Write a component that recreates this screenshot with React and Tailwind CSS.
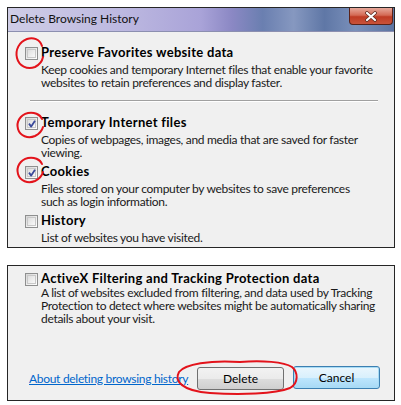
import React from "react";

function Box({ checked, className = "" }) {
  return (
    <div className={"relative w-[13px] h-[13px] shrink-0 border border-[#8e8f8f] bg-[linear-gradient(135deg,#d6d6d6_0%,#f4f4f4_70%,#ffffff_100%)] " + className}>
      <div className="absolute inset-[1px] border border-[#c8c8c8]" />
      {checked && (
        <svg className="absolute left-[1px] top-[1px]" width="10" height="10" viewBox="0 0 10 10">
          <path d="M2 4.6 L4.2 7.6 L8 1.8" fill="none" stroke="#3a4a9a" strokeWidth="1.8" strokeLinejoin="round" />
        </svg>
      )}
    </div>
  );
}

function Row({ checked, title, lines, className = "", gap = "mt-[3px]" }) {
  return (
    <div className={"flex " + className}>
      <Box checked={checked} className="mt-[3px]" />
      <div className="ml-[3px] whitespace-nowrap">
        <div className="font-bold text-[13px] tracking-[0.3px] leading-[16px] text-black">{title}</div>
        <div className={gap + " text-[12px] tracking-[-0.3px] leading-[13px] text-[#1a1a1a]"}>
          {lines.map((l, i) => (
            <div key={i}>{l}</div>
          ))}
        </div>
      </div>
    </div>
  );
}

export default function App() {
  return (
    <div
      className="relative w-[401px] h-[405px] bg-white overflow-hidden"
      style={{ fontFamily: 'Lato, "Noto Sans", sans-serif' }}
    >
      <div className="ml-[7px] mt-[7px] w-[388px] h-[241px] border border-[#262626] bg-[#f0f0f0] flex flex-col">
        <div className="h-[24px] shrink-0 flex items-start justify-between border-b border-[#8c8fb0] bg-[linear-gradient(90deg,#cfcde6_0%,#bcb8e0_30%,#a9a3d8_50%,#8b88c4_58%,#6a7fb0_66%,#8698c0_74%,#5f77a6_82%,#7a90ba_90%,#5c74a2_100%)]">
          <div className="pl-[2px] pt-[3px] text-[12px] leading-[16px] text-[#111] whitespace-nowrap">Delete Browsing History</div>
          <div className="mr-[1px] w-[44px] h-[17px] rounded-b-[4px] border border-t-0 border-[#5a2218] bg-[linear-gradient(180deg,#e7a99b_0%,#d46a55_45%,#bf3b24_55%,#c9533a_100%)] flex items-center justify-center">
            <svg width="14" height="11" viewBox="0 0 14 11">
              <path d="M3 2 L11 9 M11 2 L3 9" stroke="#5a2a20" strokeWidth="3.6" strokeLinecap="round" />
              <path d="M3 2 L11 9 M11 2 L3 9" stroke="#ffffff" strokeWidth="2.2" strokeLinecap="round" />
            </svg>
          </div>
        </div>
        <div className="pl-[17px] pt-[12px]">
          <Row
            title="Preserve Favorites website data"
            lines={[
              "Keep cookies and temporary Internet files that enable your favorite",
              "websites to retain preferences and display faster.",
            ]}
          />
          <div className="ml-[5px] w-[348px] mt-[11px] mb-[12px] h-[2px] border-t border-[#a0a0a0] border-b border-b-white" />
          <Row
            checked
            title="Temporary Internet files"
            lines={[
              "Copies of webpages, images, and media that are saved for faster",
              "viewing.",
            ]}
          />
          <Row
            checked
            className="mt-[4px]"
            title="Cookies"
            lines={[
              "Files stored on your computer by websites to save preferences",
              "such as login information.",
            ]}
          />
          <Row
            className="mt-[4px]"
            title="History"
            lines={["List of websites you have visited."]}
          />
        </div>
      </div>

      <div className="ml-[7px] mt-[17px] w-[388px] h-[136px] border border-[#262626] bg-[#f0f0f0] flex flex-col">
        <div className="pl-[17px] pt-[4px]">
          <Row
            gap="mt-0"
            title="ActiveX Filtering and Tracking Protection data"
            lines={[
              "A list of websites excluded from filtering, and data used by Tracking",
              "Protection to detect where websites might be automatically sharing",
              "details about your visit.",
            ]}
          />
        </div>
        <div className="mt-[42px] flex items-center pl-[21px] pr-[14px]">
          <span className="text-[12px] tracking-[-0.3px] leading-[14px] text-[#0066cc] underline whitespace-nowrap">About deleting browsing history</span>
          <div className="ml-auto flex gap-[9px] shrink-0">
            <div className="w-[87px] h-[23px] rounded-[3px] border border-[#707070] bg-[linear-gradient(180deg,#f2f2f2_0%,#ebebeb_50%,#dddddd_51%,#cfcfcf_100%)] flex items-center justify-center text-[12px] text-black">
              Delete
            </div>
            <div className="w-[87px] h-[23px] -mt-[1px] rounded-[3px] border border-[#3c7fb1] bg-[linear-gradient(180deg,#eaf6fd_0%,#d9f0fc_50%,#bee6fd_51%,#a7d9f5_100%)] flex items-center justify-center text-[12px] text-black shadow-[inset_0_0_0_1px_#a8dcf5]">
              Cancel
            </div>
          </div>
        </div>
      </div>

      <svg className="absolute left-0 top-0 pointer-events-none" width="401" height="405" viewBox="0 0 401 405">
        <g fill="none" stroke="#e3131b" strokeWidth="2" strokeLinecap="round">
          <path d="M42 46 C40 39 33 37 27 39 C19 42 15 50 17 58 C19 66 27 70 35 67 C39 65 42 62 43 57" />
          <path d="M42 119 C40 114 34 112 28 113 C20 115 16 122 18 129 C20 136 28 139 35 136 C39 134 42 131 43 127" />
          <path d="M42 164 C40 159 34 157 28 158 C20 160 16 167 18 174 C20 181 28 184 35 181 C39 179 42 176 43 172" />
          <path d="M240 362 C210 360 185 364 179 372 C174 381 182 391 210 393 C240 395 275 394 290 388 C299 383 298 372 292 367 C284 362 262 360 240 362" />
        </g>
      </svg>
    </div>
  );
}
